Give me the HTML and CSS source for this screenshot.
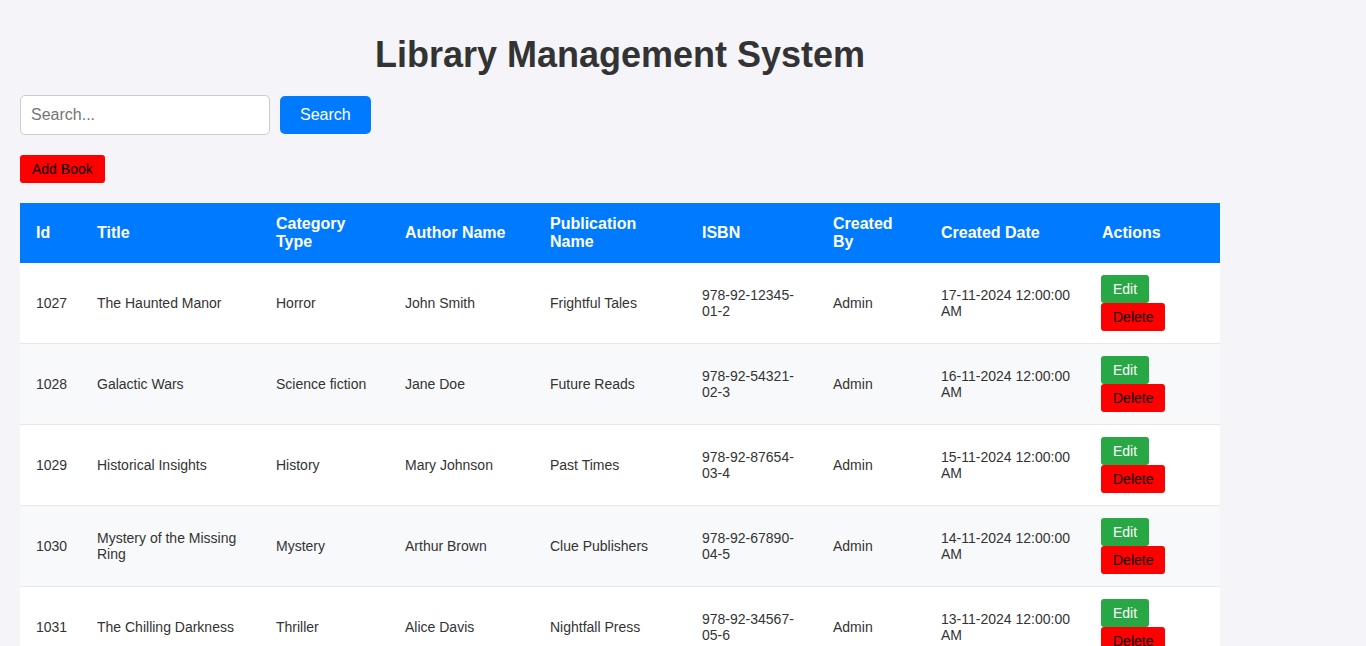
FILE: index.html
```html
<!DOCTYPE html>
<html lang="en">
<head>
<meta charset="utf-8">
<title>Library Management System</title>
<link rel="stylesheet" href="styles.css">
</head>
<body>
<div class="container">
  <h1 class="page-title">Library Management System</h1>
  <div class="search-row">
    <input class="search-input" type="text" placeholder="Search...">
    <button class="btn-search">Search</button>
  </div>
  <div class="add-row">
    <button class="btn btn-red">Add Book</button>
  </div>
  <table class="books">
    <colgroup>
      <col class="c-id"><col class="c-title"><col class="c-cat"><col class="c-author"><col class="c-pub"><col class="c-isbn"><col class="c-by"><col class="c-date"><col class="c-act">
    </colgroup>
    <thead>
      <tr><th>Id</th><th>Title</th><th>Category Type</th><th>Author Name</th><th>Publication Name</th><th>ISBN</th><th>Created By</th><th>Created Date</th><th>Actions</th></tr>
    </thead>
    <tbody>
      <tr><td>1027</td><td>The Haunted Manor</td><td>Horror</td><td>John Smith</td><td>Frightful Tales</td><td>978-92-12345-01-2</td><td>Admin</td><td>17-11-2024 12:00:00 AM</td><td><button class="btn btn-green">Edit</button><button class="btn btn-red">Delete</button></td></tr>
      <tr><td>1028</td><td>Galactic Wars</td><td>Science fiction</td><td>Jane Doe</td><td>Future Reads</td><td>978-92-54321-02-3</td><td>Admin</td><td>16-11-2024 12:00:00 AM</td><td><button class="btn btn-green">Edit</button><button class="btn btn-red">Delete</button></td></tr>
      <tr><td>1029</td><td>Historical Insights</td><td>History</td><td>Mary Johnson</td><td>Past Times</td><td>978-92-87654-03-4</td><td>Admin</td><td>15-11-2024 12:00:00 AM</td><td><button class="btn btn-green">Edit</button><button class="btn btn-red">Delete</button></td></tr>
      <tr><td>1030</td><td>Mystery of the Missing Ring</td><td>Mystery</td><td>Arthur Brown</td><td>Clue Publishers</td><td>978-92-67890-04-5</td><td>Admin</td><td>14-11-2024 12:00:00 AM</td><td><button class="btn btn-green">Edit</button><button class="btn btn-red">Delete</button></td></tr>
      <tr><td>1031</td><td>The Chilling Darkness</td><td>Thriller</td><td>Alice Davis</td><td>Nightfall Press</td><td>978-92-34567-05-6</td><td>Admin</td><td>13-11-2024 12:00:00 AM</td><td><button class="btn btn-green">Edit</button><button class="btn btn-red">Delete</button></td></tr>
      <tr><td>1032</td><td>Love in Paris</td><td>Romance</td><td>Emma Wilson</td><td>Heartline Books</td><td>978-92-11223-06-7</td><td>Admin</td><td>12-11-2024 12:00:00 AM</td><td><button class="btn btn-green">Edit</button><button class="btn btn-red">Delete</button></td></tr>
      <tr><td>1033</td><td>The Dragon's Quest</td><td>Fantasy</td><td>Robert Miller</td><td>Mythic House</td><td>978-92-44556-07-8</td><td>Admin</td><td>11-11-2024 12:00:00 AM</td><td><button class="btn btn-green">Edit</button><button class="btn btn-red">Delete</button></td></tr>
      <tr><td>1034</td><td>Mind Over Matter</td><td>Self-help</td><td>Linda Taylor</td><td>Bright Path</td><td>978-92-77889-08-9</td><td>Admin</td><td>10-11-2024 12:00:00 AM</td><td><button class="btn btn-green">Edit</button><button class="btn btn-red">Delete</button></td></tr>
      <tr><td>1035</td><td>Ocean Depths</td><td>Adventure</td><td>James Anderson</td><td>Blue Wave</td><td>978-92-99001-09-0</td><td>Admin</td><td>09-11-2024 12:00:00 AM</td><td><button class="btn btn-green">Edit</button><button class="btn btn-red">Delete</button></td></tr>
      <tr><td>1036</td><td>The Silent Witness</td><td>Crime</td><td>Sarah Thomas</td><td>Justice Press</td><td>978-92-22334-10-1</td><td>Admin</td><td>08-11-2024 12:00:00 AM</td><td><button class="btn btn-green">Edit</button><button class="btn btn-red">Delete</button></td></tr>
      <tr><td>1037</td><td>Code of the Future</td><td>Technology</td><td>David Martin</td><td>Tech World</td><td>978-92-55667-11-2</td><td>Admin</td><td>07-11-2024 12:00:00 AM</td><td><button class="btn btn-green">Edit</button><button class="btn btn-red">Delete</button></td></tr>
      <tr><td>1038</td><td>Whispers of Poetry</td><td>Poetry</td><td>Nancy Lee</td><td>Verse House</td><td>978-92-88990-12-3</td><td>Admin</td><td>06-11-2024 12:00:00 AM</td><td><button class="btn btn-green">Edit</button><button class="btn btn-red">Delete</button></td></tr>
      <tr><td>1039</td><td>Journey Through Time</td><td>History</td><td>Paul White</td><td>Past Times</td><td>978-92-13579-13-4</td><td>Admin</td><td>05-11-2024 12:00:00 AM</td><td><button class="btn btn-green">Edit</button><button class="btn btn-red">Delete</button></td></tr>
      <tr><td>1040</td><td>The Last Frontier</td><td>Science fiction</td><td>Karen Harris</td><td>Future Reads</td><td>978-92-24680-14-5</td><td>Admin</td><td>04-11-2024 12:00:00 AM</td><td><button class="btn btn-green">Edit</button><button class="btn btn-red">Delete</button></td></tr>
      <tr><td>1041</td><td>Shadows in the Hall</td><td>Horror</td><td>Mark Clark</td><td>Frightful Tales</td><td>978-92-97531-15-6</td><td>Admin</td><td>03-11-2024 12:00:00 AM</td><td><button class="btn btn-green">Edit</button><button class="btn btn-red">Delete</button></td></tr>
      <tr><td>1042</td><td>Healthy Living</td><td>Health</td><td>Laura Lewis</td><td>Bright Path</td><td>978-92-86420-16-7</td><td>Admin</td><td>02-11-2024 12:00:00 AM</td><td><button class="btn btn-green">Edit</button><button class="btn btn-red">Delete</button></td></tr>
      <tr><td>1043</td><td>The Hidden Clue</td><td>Mystery</td><td>Steven Walker</td><td>Clue Publishers</td><td>978-92-75319-17-8</td><td>Admin</td><td>01-11-2024 12:00:00 AM</td><td><button class="btn btn-green">Edit</button><button class="btn btn-red">Delete</button></td></tr>
      <tr><td>1044</td><td>Stars Above</td><td>Astronomy</td><td>Betty Hall</td><td>Cosmos Press</td><td>978-92-64208-18-9</td><td>Admin</td><td>31-10-2024 12:00:00 AM</td><td><button class="btn btn-green">Edit</button><button class="btn btn-red">Delete</button></td></tr>
    </tbody>
  </table>
</div>
</body>
</html>
```

FILE: styles.css
```css
html, body {
  margin: 0;
  padding: 0;
}

html::-webkit-scrollbar {
  width: 17px;
  background: #f1f1f1;
}

html::-webkit-scrollbar-thumb {
  background: #c1c1c1;
  border: 2px solid #f1f1f1;
}

html::-webkit-scrollbar-button:single-button {
  height: 17px;
  background: #f1f1f1;
}

body {
  background: #f4f4f9;
  font-family: "Liberation Sans", Arial, sans-serif;
  color: #333;
  padding: 20px;
}

.container {
  width: 1200px;
}

.page-title {
  margin: 14px 0 19px;
  font-size: 36px;
  font-weight: bold;
  text-align: center;
  color: #333;
  line-height: normal;
}

.search-row {
  display: flex;
  align-items: center;
  gap: 10px;
}

.search-input {
  box-sizing: border-box;
  width: 250px;
  height: 40px;
  padding: 0 10px;
  border: 1px solid #ccc;
  border-radius: 5px;
  font-family: "Liberation Sans", Arial, sans-serif;
  font-size: 16px;
  color: #333;
  background: #fff;
}

.search-input::placeholder {
  color: #757575;
}

.btn-search {
  box-sizing: border-box;
  height: 38px;
  padding: 0 20px;
  border: 0;
  border-radius: 5px;
  background: #007bff;
  color: #fff;
  font-family: "Liberation Sans", Arial, sans-serif;
  font-size: 16px;
}

.add-row {
  margin: 20px 0;
  display: flex;
}

.btn {
  box-sizing: border-box;
  display: block;
  height: 28px;
  padding: 0 12px;
  border: 0;
  border-radius: 3px;
  font-family: "Liberation Sans", Arial, sans-serif;
  font-size: 14px;
  line-height: 28px;
}

.btn-red {
  background: #ff0000;
  color: #000;
}

.btn-green {
  background: #28a745;
  color: #fff;
}

.books {
  width: 1200px;
  border-collapse: collapse;
  table-layout: fixed;
  background: #fff;
}

.c-id { width: 61px; }
.c-title { width: 179px; }
.c-cat { width: 129px; }
.c-author { width: 145px; }
.c-pub { width: 152px; }
.c-isbn { width: 131px; }
.c-by { width: 108px; }
.c-date { width: 161px; }
.c-act { width: 134px; }

.books th,
.books td {
  padding: 12px 14px 12px 16px;
  text-align: left;
  vertical-align: middle;
}

.books th {
  background: #007bff;
  color: #fff;
  font-size: 16px;
  font-weight: bold;
  line-height: 18px;
}

.books td {
  font-size: 14px;
  line-height: 16px;
  color: #333;
  border-bottom: 1px solid #e8e8e8;
}

.books tbody tr:nth-child(even) td {
  background: #f8f9fa;
}

.books td .btn {
  margin-left: -1px;
}
```
